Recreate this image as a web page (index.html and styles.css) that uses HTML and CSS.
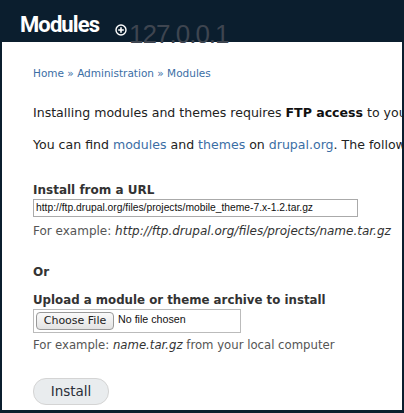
FILE: index.html
```html
<!DOCTYPE html>
<html>
<head>
<meta charset="utf-8">
<link rel="stylesheet" href="styles.css">
</head>
<body>
<div class="header">
  <h1 class="title">Modules</h1>
  <span class="add-icon"><svg width="12" height="12" viewBox="0 0 12 12"><circle cx="6" cy="6" r="5" fill="none" stroke="#fff" stroke-width="1.4"/><path d="M6 3.2v5.6M3.2 6h5.6" stroke="#fff" stroke-width="1.6"/></svg></span>
  <span class="host">127.0.0.1</span>
</div>
<div class="page">
  <div class="breadcrumb"><a href="#">Home</a> » <a href="#">Administration</a> » <a href="#">Modules</a></div>
  <p class="line">Installing modules and themes requires <b>FTP access</b> to your server to install.</p>
  <p class="line">You can find <a href="#">modules</a> and <a href="#">themes</a> on <a href="#">drupal.org</a>. The following file extensions are supported.</p>
  <div class="field">
    <label class="label">Install from a URL</label>
    <div class="textbox">http://ftp.drupal.org/files/projects/mobile_theme-7.x-1.2.tar.gz</div>
    <div class="desc">For example: <em>http://ftp.drupal.org/files/projects/name.tar.gz</em></div>
  </div>
  <div class="or">Or</div>
  <div class="field upload">
    <label class="label">Upload a module or theme archive to install</label>
    <div class="filebox"><span class="choose">Choose File</span><span class="nofile">No file chosen</span></div>
    <div class="desc desc2">For example: <em>name.tar.gz</em> from your local computer</div>
  </div>
  <div class="actions"><span class="install">Install</span></div>
</div>
</body>
</html>
```
FILE: styles.css
```css
html, body {
  margin: 0;
  padding: 0;
  background: #0b1e2e;
  height: 413px;
  overflow: hidden;
}
body {
  font-family: "DejaVu Sans", Verdana, sans-serif;
  color: #333;
}
.header {
  height: 42px;
  display: flex;
  align-items: flex-start;
  padding-left: 20px;
}
.title {
  margin: 12px 0 0 0;
  font-family: Roboto, "Liberation Sans", sans-serif;
  font-size: 22px;
  font-weight: bold;
  color: #fff;
  letter-spacing: -0.9px;
  line-height: 26px;
}
.add-icon {
  margin: 21px 0 0 16px;
  display: block;
  height: 12px;
}
.host {
  margin: 19px 0 0 2px;
  font-family: "Liberation Sans", Arial, sans-serif;
  font-size: 26px;
  line-height: 30px;
  color: #3e4550;
  letter-spacing: -1px;
}
.page {
  background: #fff;
  margin: 0 2px;
  height: 368px;
  padding: 0 0 0 31px;
  overflow: hidden;
  white-space: nowrap;
}
a {
  color: #3b6ea5;
  text-decoration: none;
}
.breadcrumb {
  padding-top: 24px;
  font-size: 10.5px;
  line-height: 14px;
  color: #3b6ea5;
}
.line {
  margin: 25px 0 0 0;
  font-size: 12.55px;
  line-height: 16px;
  color: #222;
}
.line + .line {
  margin-top: 16px;
}
.line b { color: #111; }
.field {
  margin-top: 30px;
}
.label {
  display: block;
  font-size: 12px;
  font-weight: bold;
  line-height: 15px;
  color: #333;
}
.upload .label {
  font-size: 11.8px;
}
.textbox {
  margin-top: 1px;
  width: 321px;
  height: 16px;
  border: 1px solid #aaa;
  font-family: "Liberation Sans", Arial, sans-serif;
  font-size: 10.3px;
  line-height: 16px;
  padding-left: 2px;
  color: #111;
}
.desc {
  margin-top: 7px;
  font-size: 12px;
  line-height: 15px;
  color: #555;
}
.desc2 {
  font-size: 11.7px;
}
.desc em {
  color: #333;
  font-style: italic;
}
.or {
  margin-top: 26px;
  font-size: 12px;
  font-weight: bold;
  line-height: 15px;
  color: #333;
}
.field.upload {
  margin-top: 13px;
}
.filebox {
  margin-top: 1px;
  width: 206px;
  height: 22px;
  border: 1px solid #bbb;
  display: flex;
  align-items: center;
}
.choose {
  margin-left: 2px;
  height: 16px;
  width: 76px;
  border: 1px solid #999;
  border-radius: 4px;
  background: linear-gradient(#fafafa, #e3e3e3);
  font-size: 11px;
  line-height: 16px;
  text-align: center;
  color: #222;
}
.nofile {
  margin-left: 4px;
  font-family: "Liberation Sans", Arial, sans-serif;
  font-size: 10.7px;
  color: #111;
  margin-top: -4px;
}
.upload .desc {
  margin-top: 5px;
}
.actions {
  margin-top: 25px;
}
.install {
  display: inline-block;
  width: 74px;
  height: 25px;
  border: 1px solid #d4d4d4;
  border-radius: 13px;
  background: #e9ecee;
  font-size: 13.5px;
  line-height: 25px;
  text-align: center;
  color: #2a2f38;
}
```
